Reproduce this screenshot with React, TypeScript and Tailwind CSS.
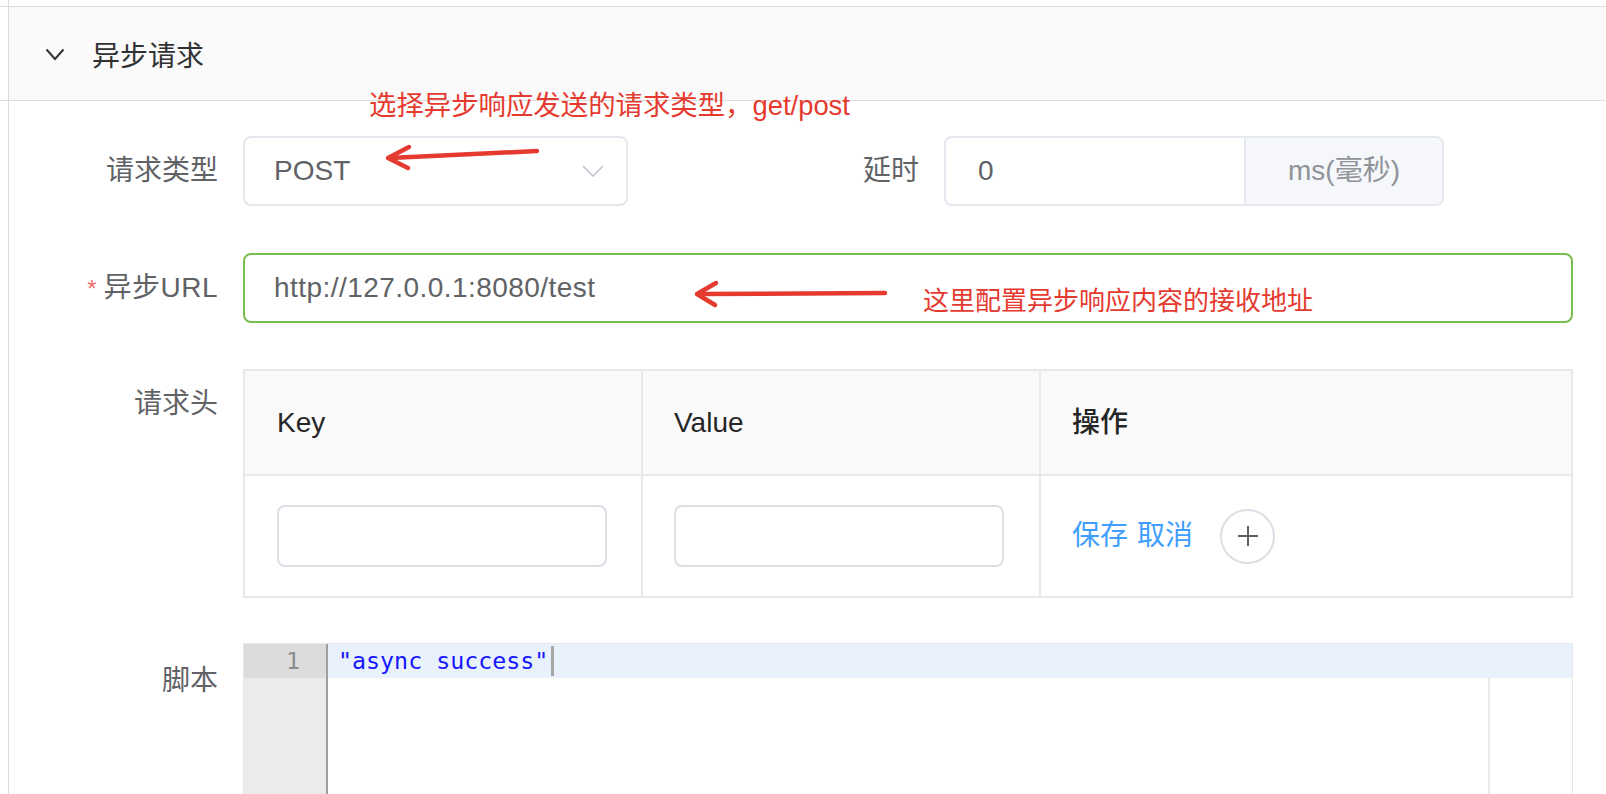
export default function App() {
  const labelCls =
    "w-[234px] shrink-0 pr-[25px] text-right text-[28px] leading-[70px] text-[#606266]";
  return (
    <div className="relative h-[794px] w-full overflow-hidden bg-white [font-family:'Liberation_Sans','Noto_Sans_CJK_SC',sans-serif]">
      <div className="h-[6px] pl-[8px]">
        <div className="h-full border-l border-[#dcdcdc]" />
      </div>
      <div className="border-y border-[#dcdcdc]">
        <div className="ml-[8px] flex h-[93px] items-center border-l border-[#dcdcdc] bg-[#fafafa] pl-[36px]">
          <svg width="20" height="13" viewBox="0 0 20 13" className="mt-[1px]">
            <polyline points="1.5,1.5 10,11 18.5,1.5" fill="none" stroke="#333" strokeWidth="2" />
          </svg>
          <span className="ml-[27px] mt-[6px] text-[28px] leading-[40px] text-[#303133]">异步请求</span>
        </div>
      </div>

      <div className="ml-[8px] flex flex-col border-l border-[#dcdcdc] pr-[33px] pt-[35px]">
        {/* Row 1 */}
        <div className="flex h-[70px] items-center">
          <div className={labelCls}>请求类型</div>
          <div className="flex h-[70px] w-[385px] shrink-0 items-center justify-between rounded-[8px] border-2 border-[#e4e7ed] pl-[29px] pr-[22px] text-[28px] text-[#606266]">
            <span>POST</span>
            <svg width="22" height="12" viewBox="0 0 22 12">
              <polyline points="1,1 11,11 21,1" fill="none" stroke="#c0c4cc" strokeWidth="1.6" />
            </svg>
          </div>
          <div className="w-[316px] shrink-0 pr-[25px] text-right text-[28px] leading-[70px] text-[#606266]">延时</div>
          <div className="flex h-[70px] w-[500px] shrink-0 rounded-[8px] border-2 border-[#e4e7ed]">
            <div className="flex flex-1 items-center pl-[32px] text-[28px] text-[#606266]">0</div>
            <div className="flex w-[198px] items-center justify-center rounded-r-[6px] border-l-2 border-[#e4e7ed] bg-[#f5f7fa] text-[28px] text-[#909399]">
              ms(毫秒)
            </div>
          </div>
        </div>

        {/* Row 2 */}
        <div className="mt-[47px] flex h-[70px] items-center">
          <div className={labelCls}>
            <span className="mr-[7px] text-[24px] text-[#f56c6c]">*</span>
            <span className="tracking-[0.5px]">异步URL</span>
          </div>
          <div className="flex h-[70px] flex-1 items-center rounded-[8px] border-2 border-[#76be4d] pl-[29px] text-[28px] tracking-[0.45px] text-[#606266]">
            http://127.0.0.1:8080/test
          </div>
        </div>

        {/* Row 3 */}
        <div className="mt-[46px] flex items-start">
          <div className={labelCls}>请求头</div>
          <div className="flex flex-1 flex-col border-2 border-[#e8e8e8]">
            <div className="flex h-[105px] border-b-2 border-[#e8e8e8] bg-[#fafafa] text-[28px] font-medium text-[#262626]">
              <div className="flex w-[398px] items-center border-r-2 border-[#e8e8e8] pl-[32px]">Key</div>
              <div className="flex w-[398px] items-center border-r-2 border-[#e8e8e8] pl-[31px]">Value</div>
              <div className="flex flex-1 items-center pl-[31px]">操作</div>
            </div>
            <div className="flex h-[120px]">
              <div className="flex w-[398px] items-center border-r-2 border-[#e8e8e8] pl-[32px]">
                <div className="h-[62px] w-[330px] rounded-[8px] border-2 border-[#dcdfe6] bg-white" />
              </div>
              <div className="flex w-[398px] items-center border-r-2 border-[#e8e8e8] pl-[31px]">
                <div className="h-[62px] w-[330px] rounded-[8px] border-2 border-[#dcdfe6] bg-white" />
              </div>
              <div className="flex flex-1 items-center pl-[31px] text-[28px] text-[#409eff]">
                <span>保存</span>
                <span className="ml-[9px]">取消</span>
                <div className="ml-[27px] flex h-[55px] w-[55px] items-center justify-center rounded-full border-2 border-[#dcdfe6]">
                  <svg width="20" height="20" viewBox="0 0 20 20">
                    <path d="M10 0 V20 M0 10 H20" stroke="#606266" strokeWidth="2" />
                  </svg>
                </div>
              </div>
            </div>
          </div>
        </div>

        {/* Row 4 */}
        <div className="mt-[45px] flex items-start">
          <div className={labelCls + " pt-[3px]"}>脚本</div>
          <div className="flex h-[200px] flex-1 border border-[#e6e6e6] [font-family:'DejaVu_Sans_Mono',monospace]">
            <div className="w-[84px] shrink-0 border-r-2 border-[#9e9e9e] bg-[#ebebeb]">
              <div className="h-[34px] bg-[#dcdcdc] pr-[26px] text-right text-[23.3px] leading-[34px] text-[#8c8c8c]">1</div>
            </div>
            <div className="flex flex-1 flex-col">
              <div className="flex h-[34px] items-center bg-[#e8f1fc] pl-[10px] text-[23.3px] text-[#1717ff]">
                <span className="leading-[34px]">"async success"</span>
                <span className="ml-[3px] h-[30px] w-[3px] bg-[#a6a6a6]" />
              </div>
              <div className="flex flex-1">
                <div className="w-[1160px] shrink-0" />
                <div className="flex-1 border-l-2 border-[#e8e8e8]" />
              </div>
            </div>
          </div>
        </div>
      </div>

      {/* Annotations */}
      <div className="absolute left-[369px] top-[91px] text-[27.4px] leading-[30px] text-[#e53a2f]">
        选择异步响应发送的请求类型，get/post
      </div>
      <div className="absolute left-[923px] top-[286px] text-[26px] leading-[30px] text-[#e53a2f]">
        这里配置异步响应内容的接收地址
      </div>
      <svg className="pointer-events-none absolute left-0 top-0" width="1606" height="794">
        <g stroke="#e53a2f" strokeWidth="4.5" fill="none" strokeLinecap="round" strokeLinejoin="round">
          <line x1="537" y1="151" x2="390" y2="158" />
          <polyline points="409,147 388,158 408,168" />
          <line x1="885" y1="293" x2="699" y2="294" />
          <polyline points="716,283 697,294 715,305" />
        </g>
      </svg>
    </div>
  );
}
